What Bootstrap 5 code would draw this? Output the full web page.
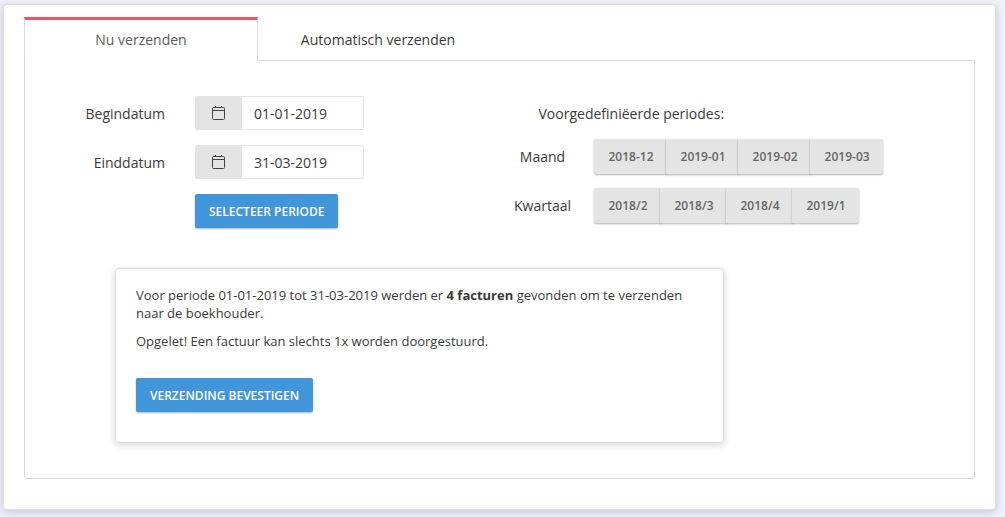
<!DOCTYPE html>
<html lang="nl">
<head>
<meta charset="utf-8">
<meta name="viewport" content="width=device-width, initial-scale=1">
<title>Facturen verzenden</title>
<link href="https://cdn.jsdelivr.net/npm/bootstrap@5.3.0/dist/css/bootstrap.min.css" rel="stylesheet">
<style>
  body { background: #f0f0fa; color: #3a3a3a; font-family: "Open Sans", sans-serif; font-size: 14px; line-height: 20px; padding: 4px 9px 8px 3px; }
  .send-card { border: 1px solid #dfe0e4; border-radius: 4px; padding: 12px 20px 30px; box-shadow: 0 2px 6px 1px rgba(0, 0, 40, .14); }
  .send-tabs { border: 0; gap: 3px; }
  .send-tabs .nav-link { width: 234px; height: 44px; margin-bottom: -1px; padding: 8px 8px 10px; border: 1px solid transparent; border-top: 3px solid transparent; border-bottom: 0; border-radius: 0; color: #3a3a3a; }
  .send-tabs .nav-link.active { color: #5c5c5c; background: #fff; border-color: #f0525f #dcdcde #fff; }
  .send-panel { border: 1px solid #d9d9db; border-radius: 0 0 3px 3px; padding: 35px 0; }
  .date-label { width: 140px; margin-right: 30px; padding-top: 2px; text-align: right; }
  .date-group { width: 169px; }
  .date-group .input-group-text { width: 47px; height: 34px; padding: 0 2px 0 0; background: #e4e4e4; border: 1px solid #e4e4e4; border-radius: 2px; color: #444; }
  .date-group .form-control { height: 34px; padding: 6px 12px; font-size: 14px; line-height: 20px; color: #3a3a3a; border: 1px solid #e4e4e4; border-radius: 2px; }
  .form-rows { gap: 15px; }
  .send-btn { height: 34px; padding: 2px 14px 0; border: 0; border-radius: 2px; background: #4195d9; color: #fff; font-size: 12px; font-weight: 600; line-height: 32px; text-transform: uppercase; box-shadow: 0 1px 2px rgba(0, 0, 0, .3); }
  .send-btn:hover { background: #3587ca; color: #fff; }
  .under-label { margin-left: 170px; }
  .period-title { margin: 8px 0 15px 39px; }
  .period-rows { gap: 14px; }
  .period-label { width: 86px; margin-right: 8px; text-align: center; }
  .period-btn { height: 35px; padding: 0 13px 0 15px; border: 0; border-radius: 2px; background: #e4e4e4; color: #666; font-size: 12px; font-weight: 600; line-height: 35px; box-shadow: 0 1px 2px rgba(0, 0, 0, .3); }
  .confirm-box { max-width: 609px; margin: 40px 20px 0 90px; padding: 17px 20px 30px; border: 1px solid #dedede; border-radius: 4px; font-size: 13px; line-height: 18px; box-shadow: 0 2px 6px 1px rgba(0, 0, 0, .14); }
  .confirm-box p { margin-bottom: 10px; }
  .confirm-box .send-btn { margin-top: 18px; }
</style>
</head>
<body>
<main class="send-card bg-white">
  <ul class="nav nav-tabs send-tabs" role="tablist">
    <li class="nav-item" role="presentation"><button class="nav-link active" id="now-tab" type="button" role="tab" data-bs-toggle="tab" data-bs-target="#now" aria-controls="now" aria-selected="true">Nu verzenden</button></li>
    <li class="nav-item" role="presentation"><button class="nav-link" id="auto-tab" type="button" role="tab" data-bs-toggle="tab" data-bs-target="#auto" aria-controls="auto" aria-selected="false">Automatisch verzenden</button></li>
  </ul>
  <div class="tab-content send-panel">
    <section class="tab-pane show active" id="now" role="tabpanel" aria-labelledby="now-tab">
      <div class="row g-0">
        <form class="col-6 d-flex flex-column align-items-start form-rows">
          <div class="d-flex align-items-center">
            <label class="date-label" for="begin">Begindatum</label>
            <div class="input-group flex-nowrap date-group">
              <span class="input-group-text justify-content-center"><svg width="14" height="14" viewBox="0 0 14 14" fill="none" stroke="currentColor" aria-hidden="true"><rect x="1.5" y="1.5" width="12" height="12" rx="1"/><path d="M1.5 4.5h12M4.5 0v2M10.5 0v2"/></svg></span>
              <input class="form-control" id="begin" type="text" value="01-01-2019">
            </div>
          </div>
          <div class="d-flex align-items-center">
            <label class="date-label" for="end">Einddatum</label>
            <div class="input-group flex-nowrap date-group">
              <span class="input-group-text justify-content-center"><svg width="14" height="14" viewBox="0 0 14 14" fill="none" stroke="currentColor" aria-hidden="true"><rect x="1.5" y="1.5" width="12" height="12" rx="1"/><path d="M1.5 4.5h12M4.5 0v2M10.5 0v2"/></svg></span>
              <input class="form-control" id="end" type="text" value="31-03-2019">
            </div>
          </div>
          <button class="btn send-btn under-label" type="button">Selecteer periode</button>
        </form>
        <div class="col-6">
          <div class="period-title">Voorgedefiniëerde periodes:</div>
          <div class="d-flex flex-column period-rows">
            <div class="d-flex align-items-center">
              <span class="period-label" id="month">Maand</span>
              <div class="btn-group" role="group" aria-labelledby="month">
                <button class="btn period-btn" type="button">2018-12</button>
                <button class="btn period-btn" type="button">2019-01</button>
                <button class="btn period-btn" type="button">2019-02</button>
                <button class="btn period-btn" type="button">2019-03</button>
              </div>
            </div>
            <div class="d-flex align-items-center">
              <span class="period-label" id="quarter">Kwartaal</span>
              <div class="btn-group" role="group" aria-labelledby="quarter">
                <button class="btn period-btn" type="button">2018/2</button>
                <button class="btn period-btn" type="button">2018/3</button>
                <button class="btn period-btn" type="button">2018/4</button>
                <button class="btn period-btn" type="button">2019/1</button>
              </div>
            </div>
          </div>
        </div>
      </div>
      <div class="confirm-box">
        <p>Voor periode 01-01-2019 tot 31-03-2019 werden er <strong>4 facturen</strong> gevonden om te verzenden naar de boekhouder.</p>
        <p>Opgelet! Een factuur kan slechts 1x worden doorgestuurd.</p>
        <button class="btn send-btn" type="button">Verzending bevestigen</button>
      </div>
    </section>
    <section class="tab-pane" id="auto" role="tabpanel" aria-labelledby="auto-tab"></section>
  </div>
</main>
<script src="https://cdn.jsdelivr.net/npm/bootstrap@5.3.0/dist/js/bootstrap.bundle.min.js"></script>
</body>
</html>
